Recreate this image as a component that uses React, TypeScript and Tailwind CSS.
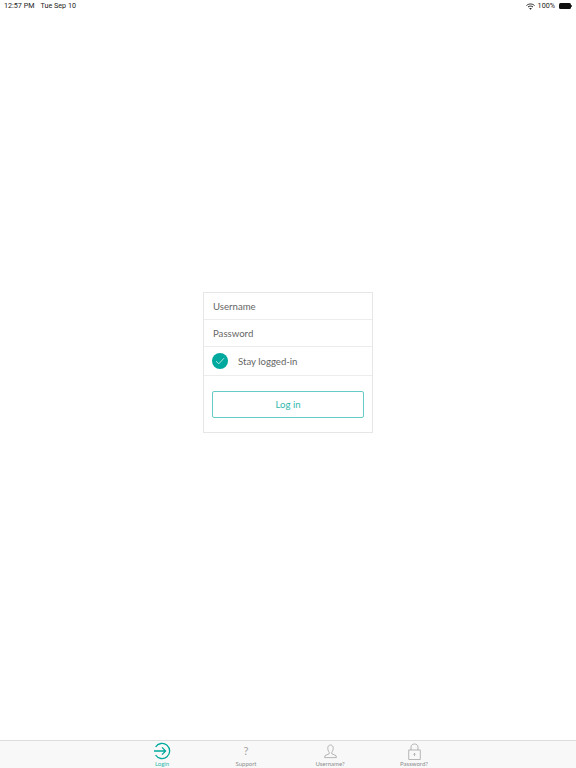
import { ReactNode } from 'react';

const font = { fontFamily: 'Lato, "Noto Sans", sans-serif' };

function TabItem({ label, active, children }: { label: string; active?: boolean; children: ReactNode }) {
    return (
        <div className="flex w-[84px] flex-col items-center">
            <div className="flex h-[18px] w-[24px] items-center justify-center">{children}</div>
            <span className={`text-[6px] leading-[7px] ${active ? 'text-[#2fb8ae]' : 'text-[#8e8e8e]'}`}>
                {label}
            </span>
        </div>
    );
}

export default function App() {
    return (
        <div className="flex h-[768px] w-[576px] flex-col bg-white" style={font}>
            {/* Status bar */}
            <div className="flex h-[12px] items-center justify-between pl-[4px] pr-[4px] font-['Roboto'] text-[7.2px] leading-[12px] text-[#222]">
                <div className="flex gap-[6px]">
                    <span>12:57 PM</span>
                    <span>Tue Sep 10</span>
                </div>
                <div className="flex items-center gap-[3px]">
                    <svg width="9" height="7" viewBox="0 0 18 14" fill="none" stroke="#222" strokeWidth="2">
                        <path d="M1 5 C5.5 1, 12.5 1, 17 5" />
                        <path d="M4 8 C7 5.6, 11 5.6, 14 8" />
                        <path d="M9 13.5 L6.5 10.8 C8 9.8, 10 9.8, 11.5 10.8 Z" fill="#222" stroke="none" />
                    </svg>
                    <span>100%</span>
                    <div className="ml-[1px] flex items-center">
                        <div className="h-[6px] w-[12px] rounded-[1.5px] bg-[#111]" />
                        <div className="h-[2px] w-[1px] bg-[#555]" />
                    </div>
                </div>
            </div>

            {/* Login card */}
            <div className="flex flex-1 justify-center pt-[280px]">
                <div className="h-[141px] w-[170px] border border-[#e6e6e6] text-[9.6px] text-[#666]">
                    <div className="flex h-[27px] items-center border-b border-[#ececec] pl-[9px] pt-[2px]">Username</div>
                    <div className="flex h-[27px] items-center border-b border-[#ececec] pl-[9px] pt-[2px]">Password</div>
                    <div className="flex h-[29px] items-center border-b border-[#ececec] pl-[8px]">
                        <div className="flex h-[16px] w-[16px] items-center justify-center rounded-full bg-[#00a99d]">
                            <svg width="12" height="12" viewBox="0 0 12 12" fill="none" stroke="#d9f3f0" strokeWidth="0.8">
                                <path d="M2 6.2 L4.8 8.8 L10 3.2" />
                            </svg>
                        </div>
                        <span className="ml-[10px] pt-[2px]">Stay logged-in</span>
                    </div>
                    <div className="px-[8px] pt-[15px]">
                        <div className="flex h-[27px] items-center justify-center rounded-[2px] border border-[#66cbc4] pt-[2px] text-[#2fb8ae]">
                            Log in
                        </div>
                    </div>
                </div>
            </div>

            {/* Tab bar */}
            <div className="flex h-[28px] items-start justify-center border-t border-[#dcdcdc] bg-[#f8f8f8] pt-[1px]">
                <TabItem label="Login" active>
                    <svg width="18" height="18" viewBox="0 0 18 18" fill="none" stroke="#00a99d" strokeWidth="1.3">
                        <path d="M2.6 5 A7.6 7.6 0 1 1 2.6 13" />
                        <path d="M1 9 H12.5 M9 5.4 L12.6 9 L9 12.6" />
                    </svg>
                </TabItem>
                <TabItem label="Support">
                    <span className="text-[11px] leading-[16px] text-[#a5a5a5]">?</span>
                </TabItem>
                <TabItem label="Username?">
                    <svg width="13" height="15" viewBox="0 0 13 15" fill="none" stroke="#9a9a9a" strokeWidth="0.7">
                        <path d="M6.5 1 C4.5 1 3.6 2.6 3.8 4.6 C4 6.4 4.6 7.6 5.2 8.2 L5.2 9.8 L1 11.6 L0.6 13.6 H12.4 L12 11.6 L7.8 9.8 L7.8 8.2 C8.4 7.6 9 6.4 9.2 4.6 C9.4 2.6 8.5 1 6.5 1 Z" />
                    </svg>
                </TabItem>
                <TabItem label="Password?">
                    <svg width="13" height="17" viewBox="0 0 13 17" fill="none" stroke="#9a9a9a" strokeWidth="0.7">
                        <rect x="0.8" y="7" width="11.4" height="9.5" />
                        <path d="M3 7 V4 C3 0 10 0 10 4 V7" />
                        <path d="M6.5 13 V10.5 M5.4 11.5 L6.5 10.3 L7.6 11.5" />
                    </svg>
                </TabItem>
            </div>
        </div>
    );
}
